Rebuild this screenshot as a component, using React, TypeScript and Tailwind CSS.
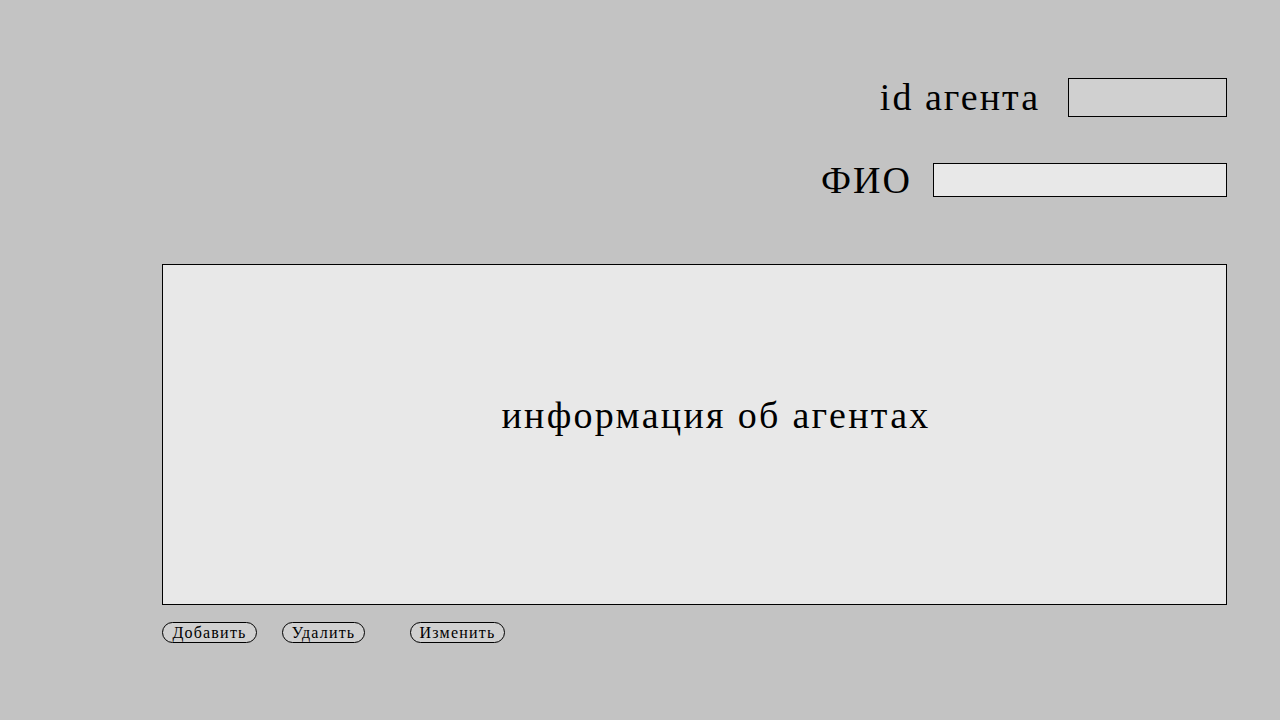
import React from 'react';

const serif = { fontFamily: '"Liberation Serif", "DejaVu Serif", serif' };

export default function App() {
  return (
    <div className="w-[1280px] h-[720px] bg-[#c3c3c3] text-black flex flex-col pl-[162px] pr-[53px] pt-[78px]" style={serif}>
      <div className="flex justify-end items-center h-[39px]">
        <span className="text-[38px] leading-none tracking-[2px] mr-[28px] mt-[-2px]">id агента</span>
        <input className="w-[159px] h-[39px] bg-[#d0d0d0] border border-black outline-none" />
      </div>
      <div className="flex justify-end items-center h-[34px] mt-[46px]">
        <span className="text-[38px] leading-none tracking-[2px] mr-[21px]">ФИО</span>
        <input className="w-[294px] h-[34px] bg-[#e8e8e8] border border-black outline-none" />
      </div>
      <div className="mt-[67px] h-[341px] bg-[#e8e8e8] border border-black flex items-center justify-center">
        <span className="text-[38px] leading-none tracking-[2.3px] ml-[43px] mt-[-40px]">информация об агентах</span>
      </div>
      <div className="flex items-center mt-[17px] text-[16px] tracking-[1.2px]">
        <button className="h-[21px] w-[95px] rounded-full border border-black bg-[#d0d0d0] leading-none">Добавить</button>
        <button className="h-[21px] w-[83px] ml-[25px] rounded-full border border-black bg-[#d0d0d0] leading-none">Удалить</button>
        <button className="h-[21px] w-[95px] ml-[45px] rounded-full border border-black bg-[#d0d0d0] leading-none">Изменить</button>
      </div>
    </div>
  );
}
